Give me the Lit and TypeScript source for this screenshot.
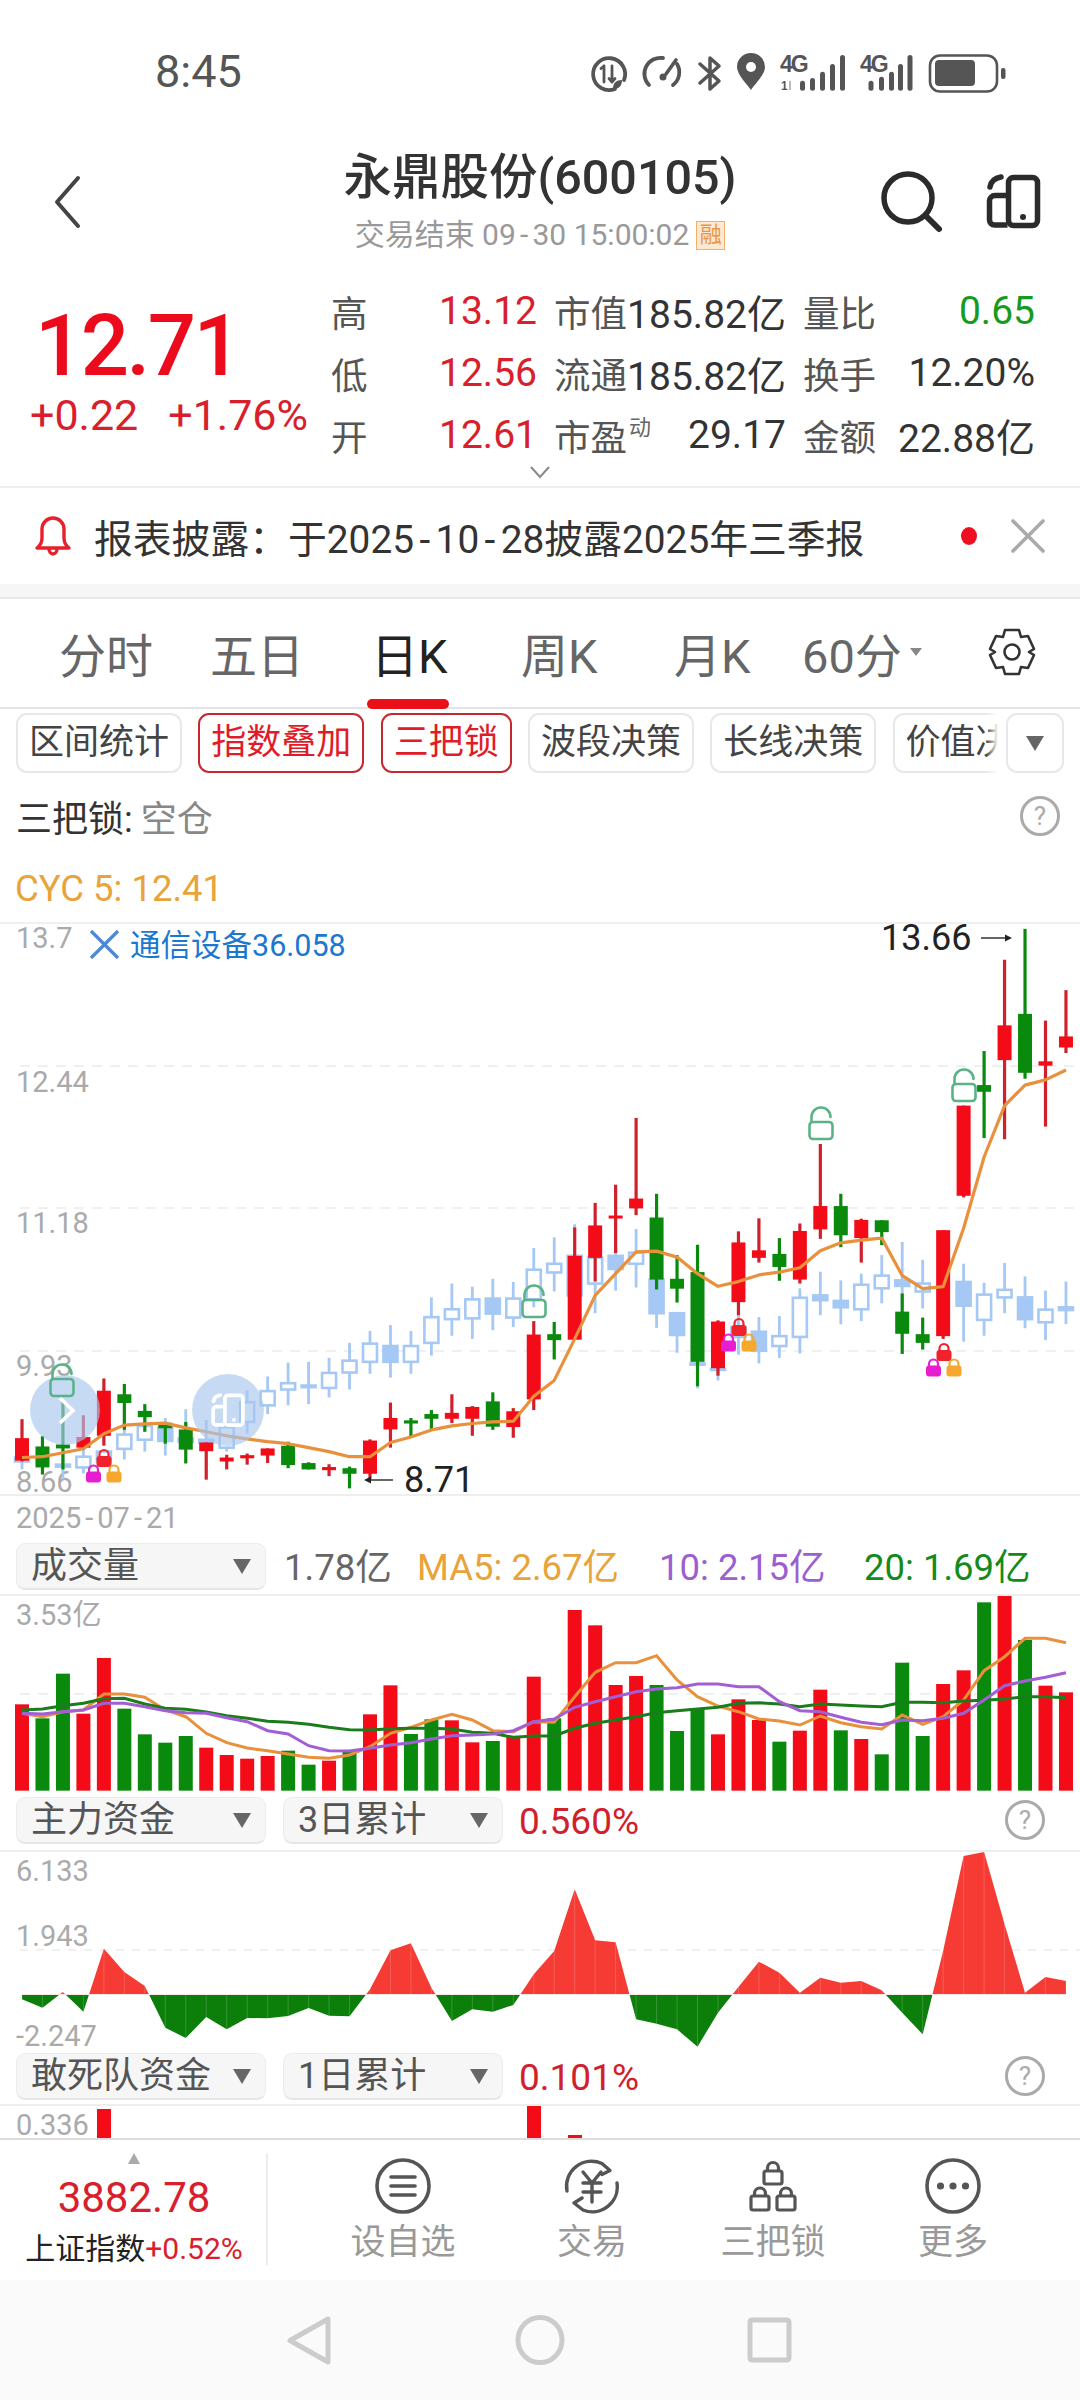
import { LitElement, html, css, svg } from "lit";
import { customElement } from "lit/decorators.js";

const RED = "#f40b18";
const GREEN = "#0a8a0c";
const BLUE = "#a5c8f4";
const X = (i: number) => 22 + 20.47 * i;
const KY = (z: number) => 900 + z / 2.529;
const VY = (z: number) => 1520 + z / 3;
const AY = (z: number) => 1800 + z / 3;

// [wick top, body top, body bottom, wick bottom, 1 = red / 0 = green]
const CANDLES: number[][] = [
  [1313, 1361, 1418, 1420, 1], [1356, 1382, 1435, 1453, 0], [1270, 1377, 1387, 1440, 0], [1303, 1358, 1385, 1390, 1],
  [1210, 1241, 1355, 1380, 1], [1224, 1250, 1272, 1340, 0], [1275, 1292, 1308, 1345, 0], [1320, 1322, 1336, 1375, 0],
  [1320, 1339, 1390, 1425, 0], [1372, 1372, 1394, 1466, 1], [1403, 1410, 1420, 1440, 1], [1400, 1404, 1412, 1428, 1],
  [1387, 1387, 1405, 1424, 1], [1370, 1380, 1429, 1437, 0], [1422, 1424, 1440, 1440, 0], [1427, 1434, 1442, 1457, 1],
  [1433, 1437, 1451, 1488, 0], [1364, 1367, 1451, 1465, 1], [1271, 1310, 1339, 1385, 1], [1310, 1316, 1324, 1358, 0],
  [1290, 1300, 1312, 1340, 0], [1250, 1297, 1312, 1323, 1], [1280, 1282, 1312, 1355, 1], [1245, 1268, 1332, 1340, 0],
  [1285, 1293, 1333, 1360, 1], [1065, 1099, 1263, 1290, 1], [1067, 1098, 1113, 1162, 0], [828, 900, 1112, 1112, 1],
  [766, 823, 905, 965, 1], [720, 798, 805, 893, 1], [551, 755, 780, 797, 1], [743, 803, 960, 985, 0],
  [898, 958, 983, 1018, 0], [872, 941, 1168, 1230, 0], [1063, 1066, 1184, 1203, 1], [838, 866, 1017, 1050, 1],
  [805, 886, 905, 917, 1], [855, 895, 928, 963, 0], [818, 837, 960, 970, 1], [617, 774, 833, 857, 1],
  [743, 774, 848, 878, 0], [806, 809, 855, 917, 1], [810, 810, 840, 873, 0], [995, 1041, 1097, 1148, 0],
  [1056, 1098, 1120, 1137, 0], [835, 835, 1103, 1110, 1], [520, 520, 748, 752, 1], [382, 468, 485, 602, 0],
  [151, 317, 405, 605, 1], [73, 288, 437, 452, 0], [305, 408, 419, 573, 1], [228, 345, 373, 387, 1],
];

// [index, wick top, body top, body bottom, wick bottom, filled]
const OVERLAY: number[][] = [
  [0, 1400, 1410, 1420, 1440, 0], [2, 1400, 1428, 1433, 1465, 1], [3, 1385, 1408, 1435, 1450, 0], [4, 1392, 1395, 1420, 1425, 0],
  [5, 1320, 1352, 1388, 1415, 0], [6, 1300, 1330, 1365, 1395, 0], [7, 1310, 1335, 1368, 1405, 1], [8, 1288, 1362, 1370, 1380, 1],
  [9, 1315, 1365, 1372, 1385, 1], [10, 1320, 1333, 1385, 1395, 0], [11, 1240, 1270, 1320, 1350, 0], [12, 1205, 1242, 1278, 1300, 0],
  [13, 1170, 1222, 1238, 1278, 0], [14, 1168, 1228, 1232, 1275, 1], [15, 1158, 1196, 1234, 1258, 0], [16, 1120, 1165, 1195, 1238, 0],
  [17, 1090, 1122, 1168, 1198, 0], [18, 1075, 1128, 1168, 1208, 1], [19, 1090, 1128, 1168, 1198, 0], [20, 1005, 1055, 1120, 1152, 0],
  [21, 970, 1035, 1060, 1102, 0], [22, 978, 1010, 1058, 1110, 0], [23, 958, 1008, 1046, 1088, 1], [24, 966, 1008, 1056, 1080, 0],
  [25, 880, 935, 1010, 1030, 0], [26, 853, 920, 942, 990, 0], [27, 820, 900, 1000, 1040, 0], [28, 905, 905, 970, 1045, 0],
  [29, 890, 900, 933, 988, 1], [30, 832, 892, 920, 980, 0], [31, 960, 960, 1045, 1082, 1], [32, 1045, 1045, 1100, 1145, 1],
  [33, 1170, 1172, 1175, 1235, 1], [34, 1185, 1186, 1188, 1215, 1], [35, 1040, 1080, 1105, 1150, 0], [36, 1055, 1092, 1140, 1172, 1],
  [37, 1052, 1103, 1128, 1158, 0], [38, 982, 1006, 1105, 1147, 0], [39, 940, 1000, 1012, 1050, 1], [40, 962, 1014, 1030, 1073, 1],
  [41, 945, 973, 1035, 1065, 0], [42, 898, 950, 982, 1020, 0], [43, 865, 962, 976, 1030, 1], [44, 910, 970, 990, 1033, 0],
  [46, 920, 966, 1026, 1117, 1], [47, 968, 998, 1062, 1102, 0], [48, 918, 986, 1005, 1045, 0], [49, 952, 1005, 1060, 1083, 1],
  [50, 988, 1036, 1068, 1113, 0], [51, 965, 1030, 1037, 1072, 1],
];

const CYC = [1410, 1408, 1398, 1388, 1350, 1328, 1325, 1323, 1335, 1345, 1355, 1363, 1370, 1375, 1385, 1395, 1408, 1408, 1372, 1358, 1340, 1330, 1324, 1320, 1318, 1255, 1215, 1110, 1000, 945, 890, 888, 903, 945, 977, 965, 948, 941, 930, 887, 867, 860, 855, 950, 983, 978, 830, 650, 520, 468, 455, 430];

const VOL: [number, number][] = [
  [553, 1], [595, 0], [461, 0], [581, 1], [414, 1], [566, 0], [643, 0], [668, 0], [648, 0], [683, 1], [705, 1], [716, 1], [708, 1],
  [692, 0], [734, 0], [722, 1], [690, 0], [583, 1], [496, 1], [642, 0], [598, 0], [601, 1], [667, 1], [663, 0], [648, 1], [470, 1],
  [595, 0], [270, 1], [316, 1], [495, 1], [468, 1], [495, 0], [633, 0], [565, 0], [643, 1], [538, 1], [600, 1], [665, 0], [632, 1],
  [509, 1], [631, 0], [657, 1], [703, 0], [428, 0], [648, 0], [492, 1], [451, 1], [247, 0], [228, 1], [360, 0], [497, 1], [517, 1],
];
const MA5 = [580, 590, 575, 570, 522, 522, 532, 570, 590, 640, 668, 684, 692, 702, 712, 715, 705, 680, 640, 622, 600, 583, 600, 632, 635, 605, 607, 530, 457, 428, 428, 407, 480, 530, 558, 575, 597, 603, 615, 588, 608, 620, 627, 585, 613, 590, 540, 452, 410, 355, 355, 368];
const MA10 = [580, 582, 575, 570, 550, 550, 560, 572, 578, 580, 593, 605, 632, 642, 677, 692, 693, 685, 675, 668, 657, 647, 645, 642, 632, 605, 597, 562, 545, 530, 515, 507, 503, 492, 492, 500, 500, 545, 572, 575, 592, 607, 614, 600, 602, 595, 580, 540, 497, 483, 472, 458];
const MA20 = [570, 567, 557, 550, 536, 535, 552, 565, 568, 576, 587, 595, 604, 607, 613, 622, 629, 630, 626, 625, 625, 627, 637, 640, 652, 648, 648, 625, 610, 600, 590, 578, 572, 567, 562, 550, 548, 552, 560, 552, 555, 558, 560, 547, 547, 548, 543, 541, 537, 530, 530, 533];
const FLOW = [595, 620, 573, 632, 443, 513, 555, 680, 711, 648, 685, 651, 652, 645, 621, 644, 646, 565, 448, 427, 560, 660, 625, 632, 612, 520, 450, 265, 418, 424, 655, 668, 685, 737, 635, 558, 482, 515, 575, 530, 545, 540, 568, 635, 700, 450, 165, 153, 370, 575, 528, 540];

const line = (vals: number[], f: (z: number) => number) => vals.map((v, i) => `${X(i).toFixed(1)},${f(v).toFixed(1)}`).join(" ");

const phoneIcon = (stroke: string, w: number) => svg`
  <g fill="none" stroke=${stroke} stroke-width=${w} stroke-linejoin="round">
    <rect x="1008.5" y="177.5" width="29" height="48" rx="5"/>
    <path d="M1008 195.5h-13a5.5 5.5 0 0 0-5.500 5.500v19a5 5 0 0 0 5 5h13"/>
    <path d="M1001 177c-6 1-10 4-11 10" stroke-linecap="round"/>
  </g>
  <circle cx="1023" cy="217" r="3" fill=${stroke}/>`;

const openLock = (cx: number, top: number) => svg`
  <g fill="none" stroke="#5ab386" stroke-width="2.600">
    <rect x=${cx - 11.5} y=${top + 16} width="23" height="17" rx="3.500"/>
    <path d=${`M${cx - 9.5} ${top + 16}v-5a9.500 9.500 0 0 1 19 0`} stroke-linecap="round"/>
  </g>`;

const miniLock = (cx: number, top: number, c: string) => svg`
  <path d=${`M${cx - 4.5} ${top + 8}v-2.500a4.500 4.500 0 0 1 9 0v2.500`} fill="none" stroke=${c} stroke-width="2.200"/>
  <rect x=${cx - 7.5} y=${top + 7} width="15" height="11" rx="3" fill=${c}/>`;

const triple = (cx: number, top: number) => svg`
  ${miniLock(cx, top, "#f0222b")}
  ${miniLock(cx - 10.5, top + 15.5, "#e61ed0")}
  ${miniLock(cx + 10, top + 15.5, "#f6a82c")}`;

const helpIcon = svg`<svg class="help" viewBox="0 0 42 42"><circle cx="21" cy="21" r="18.500" fill="none" stroke="#aaa" stroke-width="3"/><text x="21" y="30" text-anchor="middle" class="q">?</text></svg>`;

@customElement("app-root")
export class AppRoot extends LitElement {
  static styles = css`
    :host {
      display: block;
      width: 1080px;
      height: 2400px;
      overflow: hidden;
      background: #fff;
      font-family: Roboto, "Noto Sans CJK SC", sans-serif;
      color: #333;
    }
    svg { display: block; }
    .chart { flex: none; overflow: visible; }
    .page { display: flex; flex-direction: column; width: 1080px; height: 2400px; }
    .hy { padding: 0 .14em; }

    .status { height: 110px; flex: none; display: flex; align-items: flex-start; }
    .time { margin: 46px 0 0 155px; font-size: 45px; line-height: 52px; color: #555; }
    .status-icons { margin: 45px 60px 0 auto; width: 440px; height: 55px; }
    .g4 { font: 700 23px "Liberation Sans", sans-serif; fill: #555; letter-spacing: -2px; }
    .g1 { font: 700 12px "Liberation Sans", sans-serif; fill: #555; }

    .head { height: 152px; flex: none; display: grid; grid-template-columns: 1fr auto 1fr; align-items: start; }
    .back { width: 30px; height: 54px; margin: 65px 0 0 52px; }
    .head-mid { display: flex; flex-direction: column; align-items: center; padding-top: 38px; }
    .name { font-size: 48.500px; line-height: 60px; font-weight: 500; color: #333; white-space: nowrap; }
    .sub { margin-top: 7px; display: flex; align-items: center; gap: 7px; font-size: 30px; line-height: 40px; color: #999; white-space: nowrap; }
    .rong { display: block; width: 27px; height: 27px; border: 1px solid #f2b06b; background: #fce9d0; color: #e8964a; font-size: 22px; line-height: 26px; text-align: center; }
    .head-right { width: 170px; height: 66px; margin: 58px 35px 0 0; justify-self: end; }

    .quote { height: 226px; flex: none; display: flex; flex-direction: column; border-bottom: 2px solid #eee; box-sizing: border-box; }
    .quote-top { display: flex; padding-top: 18px; }
    .price { width: 331px; flex: none; padding-left: 35px; box-sizing: border-box; }
    .last { font-size: 85px; line-height: 90px; font-weight: 500; color: #ec0b1c; letter-spacing: -2.500px; margin-top: 21px; }
    .chg { display: flex; gap: 30px; margin: 0 0 0 -5px; font-size: 43px; line-height: 48px; color: #d8202c; white-space: nowrap; }
    .stats { display: grid; grid-template-columns: 206px 232px 232px; column-gap: 17px; grid-auto-rows: 62px; }
    .cell { display: flex; justify-content: space-between; align-items: center; font-size: 39px; white-space: nowrap; color: #333; }
    .cell .l { font-size: 36.500px; color: #555; }
    .red { color: #d8202c; }
    .grn { color: #179a1e; }
    .dyn { font-size: 22px; vertical-align: 16px; margin-left: 2px; color: #666; }
    .chev { width: 22px; height: 14px; margin: -1px auto 0; }

    .notice { height: 96px; flex: none; display: flex; align-items: center; padding: 0 35px 0 34px; box-sizing: border-box; }
    .bell { width: 38px; height: 44px; flex: none; }
    .notice-txt { margin-left: 22px; font-size: 38.800px; color: #333; white-space: nowrap; }
    .dot { margin-left: auto; width: 16px; height: 18px; border-radius: 50%; background: #ee1020; flex: none; }
    .close { margin-left: 34px; width: 34px; height: 34px; flex: none; }
    .band { height: 15px; flex: none; background: #f6f6f6; border-bottom: 2px solid #e8e8e8; box-sizing: border-box; }

    .tabs { height: 110px; flex: none; display: grid; grid-template-columns: 151px 161px 150px 153px 128px 185px auto; padding-left: 59px; align-items: center; position: relative; border-bottom: 2px solid #e4e4e4; box-sizing: border-box; padding-bottom: 2px; font-size: 47px; color: #666; }
    .tab { display: flex; align-items: center; white-space: nowrap; }
    .tab.on { color: #222; }
    .bar { position: absolute; left: 367px; top: 100px; width: 82px; height: 10px; border-radius: 5px; background: #ea1018; }
    .caret { width: 12px; height: 8px; margin-left: 8px; }
    .gear { width: 50px; height: 50px; }

    .chips { height: 66px; flex: none; display: flex; padding-top: 4px; box-sizing: border-box; }
    .chips-scroll { width: 998px; flex: none; display: flex; gap: 16.300px; padding-left: 16px; overflow: hidden; position: relative; box-sizing: border-box; }
    .chips-scroll::after { content: ""; position: absolute; right: 0; top: 0; bottom: 0; width: 12px; background: linear-gradient(to right, rgba(255,255,255,0), #fff); }
    .chip { flex: none; height: 60px; box-sizing: border-box; padding: 0 11px; border: 2px solid #e8e8e8; border-radius: 11px; font-size: 35px; line-height: 56px; color: #444; white-space: nowrap; }
    .chip.act { border-color: #c22a2f; color: #e01c28; }
    .chip-dd { margin-left: 8px; width: 58px; height: 60px; box-sizing: border-box; border: 2px solid #e8e8e8; border-radius: 11px; display: flex; align-items: center; justify-content: center; }
    .tri { width: 0; height: 0; border-left: 9px solid transparent; border-right: 9px solid transparent; border-top: 15px solid #666; flex: none; }

    .lock-row { height: 85px; flex: none; display: flex; align-items: center; padding: 0 19px 4px 16px; box-sizing: border-box; font-size: 36px; color: #333; }
    .lock-row .v { color: #888; margin-left: 8px; }
    .help { width: 42px; height: 42px; margin-left: auto; flex: none; }
    .q { font: 400 26px Roboto, sans-serif; fill: #aaa; }
    .cyc-row { height: 64px; flex: none; padding-left: 15px; font-size: 36.500px; line-height: 58px; color: #e8a33a; box-sizing: border-box; border-bottom: 2px solid #f0f0f0; }

    .axis { font-size: 29px; fill: #aaa; font-family: Roboto, "Noto Sans CJK SC", sans-serif; dominant-baseline: central; }
    .ov-name { font-size: 30.500px; fill: #1b78d0; font-family: Roboto, "Noto Sans CJK SC", sans-serif; dominant-baseline: central; }
    .ext { font-size: 36px; fill: #222; font-family: Roboto, sans-serif; dominant-baseline: central; }

    .date { height: 49px; flex: none; padding-left: 16px; font-size: 29px; line-height: 44px; color: #aaa; border-top: 2px solid #eee; box-sizing: border-box; }
    .ind { flex: none; display: grid; padding-left: 16px; box-sizing: border-box; font-size: 36.500px; white-space: nowrap; border-bottom: 2px solid #eee; align-items: start; }
    .vol-h { height: 53px; grid-template-columns: 268px 133px 242px 205px auto; }
    .cap-h { grid-template-columns: 267px 236px auto 1fr; padding-right: 34px; }
    .h55 { height: 55px; }
    .h53 { height: 53px; }
    .sel { height: 47px; box-sizing: border-box; display: flex; align-items: center; justify-content: space-between; background: #f6f6f6; border: 1px solid #ececec; border-bottom: 2px solid #e6e6e6; border-radius: 9px; padding: 0 14px; color: #555; font-size: 36px; line-height: 46px; }
    .sel.w250 { width: 250px; }
    .sel.w220 { width: 220px; }
    .ind .tx { line-height: 50px; }
    .gr { color: #666; }
    .or { color: #e8a33a; }
    .pu { color: #9c5fd0; }
    .g2 { color: #148a1a; }
    .pct { color: #d0202c; font-size: 37px; }
    .ind .help { margin: 2px 0 0 auto; }
    .sp5 { height: 5px; flex: none; }

    .bottom { height: 142px; flex: none; display: flex; border-top: 2px solid #ddd; box-sizing: border-box; }
    .idx { width: 268px; flex: none; box-sizing: border-box; display: flex; flex-direction: column; align-items: center; padding-top: 13px; position: relative; }
    .idx::after { content: ""; position: absolute; right: 0; top: 13px; height: 112px; width: 2px; background: #eee; }
    .up { width: 12px; height: 11px; }
    .idx-v { font-size: 42px; line-height: 48px; margin-top: 10px; color: #d8202c; }
    .idx-l { margin-top: 5px; font-size: 30px; line-height: 44px; color: #222; white-space: nowrap; }
    .navs { flex: 1; display: grid; grid-template-columns: 184px 194px 168px 192px; padding-left: 43px; }
    .nav { display: flex; flex-direction: column; align-items: center; padding-top: 18px; }
    .nav svg { width: 60px; height: 56px; }
    .nav span { font-size: 35px; line-height: 48px; color: #999; margin-top: 5px; white-space: nowrap; }
    .sys { height: 120px; flex: none; background: #fafafa; }
  `;

  private statusIcons() {
    const bars = (xs: number[], tops: number[]) => xs.map((x, i) => svg`<rect x=${x} y=${45 + tops[i]} width="5" height=${45.7 - tops[i]} rx="2.500" fill="#555"/>`);
    return svg`<svg class="status-icons" viewBox="580 45 440 55">
      <g fill="none" stroke="#555" stroke-width="3.800" stroke-linecap="round">
        <path d="M624 80a16 16 0 1 0-9 9"/>
        <path d="M604 66l-3 2.500M604 66v16M612 66v16M612 82l-3-3.500M612 82l3-3.500" stroke-width="2.800"/>
        <path d="M649 85a16 16 0 0 1 14-27M677 64a16 16 0 0 1-4 21"/>
        <path d="M676 60l-10 14" stroke-width="3.600"/>
        <path d="M700 64l19 17-9 8V58l9 8-19 17" stroke-width="3.500" stroke-linejoin="round"/>
      </g>
      <path d="M622 80c-6 0-9 3-9 9 6 0 9-3 9-9z" fill="#555"/>
      <circle cx="663" cy="77" r="3.500" fill="#555"/>
      <path d="M751 90c-3-5-14-15-14-23a14 14 0 0 1 28 0c0 8-11 18-14 23z" fill="#555"/>
      <circle cx="751" cy="67" r="5" fill="#fff"/>
      <text x="780" y="72" class="g4">4G</text>
      <text x="781" y="90" class="g1">1</text>
      <path d="M790 81v9" stroke="#bbb" stroke-width="2"/>
      ${bars([800, 810, 820, 830, 840], [35.7, 33, 26.7, 19, 10])}
      <text x="860" y="72" class="g4">4G</text>
      ${bars([868.5, 879, 889, 898, 907.5], [35.7, 31.7, 26.7, 19, 10])}
      <rect x="930" y="55.500" width="67" height="36" rx="10" fill="none" stroke="#555" stroke-width="2.600"/>
      <rect x="935" y="60" width="40" height="26" rx="4" fill="#555"/>
      <rect x="1001" y="68" width="4.500" height="11" rx="2" fill="#555"/>
    </svg>`;
  }

  private kChart() {
    const overlay = OVERLAY.map(([i, wt, bt, bb, wb, filled]) => {
      const x = X(i);
      return svg`<path d=${`M${x} ${KY(wt)}V${KY(wb)}`} stroke=${BLUE} stroke-width="2.800"/>
        <rect x=${x - 7} y=${KY(bt)} width="14" height=${Math.max(KY(bb) - KY(bt), 1)} fill=${filled ? BLUE : "#fff"} stroke=${BLUE} stroke-width="2.600"/>`;
    });
    const candles = CANDLES.map(([wt, bt, bb, wb, up], i) => {
      const x = X(i);
      const c = up ? RED : GREEN;
      const wc = up ? "#d0202c" : GREEN;
      return svg`<path d=${`M${x} ${KY(wt)}V${KY(wb)}`} stroke=${wc} stroke-width="3.200"/>
        <rect x=${x - 7} y=${KY(bt)} width="14" height=${Math.max(KY(bb) - KY(bt), 3)} fill=${c}/>`;
    });
    const grid = [1066, 1208, 1351].map((y) => svg`<path d=${`M20 ${y}H1080`} stroke="#ececec" stroke-width="1.500" stroke-dasharray="10 8"/>`);
    return svg`<svg class="chart" width="1080" height="570" viewBox="0 924 1080 570">
      ${grid}
      <text x="16" y="938" class="axis">13.7</text>
      <text x="16" y="1082" class="axis">12.44</text>
      <text x="16" y="1223" class="axis">11.18</text>
      <text x="16" y="1366" class="axis">9.93</text>
      <text x="16" y="1482" class="axis">8.66</text>
      <path d="M91 931l27 27M118 931l-27 27" stroke="#4d87d8" stroke-width="3.200" fill="none"/>
      <text x="130" y="945" class="ov-name">通信设备36.058</text>
      ${overlay}
      ${candles}
      <polyline points=${line(CYC, KY)} fill="none" stroke="#e8903c" stroke-width="3.200" stroke-linejoin="round"/>
      <circle cx="65" cy="1410" r="35" fill="#a9c6ee" fill-opacity=".65"/>
      <circle cx="228" cy="1410" r="36" fill="#a9c6ee" fill-opacity=".65"/>
      <path d="M60 1398l13 12.500-13 12.500" fill="none" stroke="#fff" stroke-width="3.600"/>
      <g transform="translate(228 1410) scale(.62) translate(-1013.500 -201)">${phoneIcon("#fff", 6)}</g>
      ${openLock(62, 1363)}
      ${openLock(534, 1284)}
      ${openLock(821, 1106)}
      ${openLock(964, 1068)}
      ${triple(104, 1449)}
      ${triple(739, 1318)}
      ${triple(944, 1343)}
      <text x="881" y="938" class="ext">13.66</text>
      <path d="M981 938h27" stroke="#333" stroke-width="1.500"/><path d="M1012 938l-7-3.500v7z" fill="#222"/>
      <text x="404" y="1480" class="ext">8.71</text>
      <path d="M368 1480h25" stroke="#333" stroke-width="1.500"/><path d="M364 1480l7-3.500v7z" fill="#222"/>
    </svg>`;
  }

  private volChart() {
    const base = VY(812);
    const bars = VOL.map(([t, up], i) => svg`<rect x=${X(i) - 7} y=${VY(t)} width="14" height=${base - VY(t)} fill=${up ? RED : GREEN}/>`);
    return svg`<svg class="chart" width="1080" height="196" viewBox="0 1596 1080 196">
      <path d="M20 1694H1080" stroke="#ececec" stroke-width="1.500" stroke-dasharray="10 8"/>
      <text x="16" y="1615" class="axis">3.53亿</text>
      ${bars}
      <polyline points=${line(MA5, VY)} fill="none" stroke="#e8903c" stroke-width="3"/>
      <polyline points=${line(MA20, VY)} fill="none" stroke="#1a7d1c" stroke-width="3"/>
      <polyline points=${line(MA10, VY)} fill="none" stroke="#a25fd4" stroke-width="3"/>
    </svg>`;
  }

  private flowChart() {
    const base = 1993.5;
    const pts = FLOW.map((v, i) => `${X(i).toFixed(1)} ${AY(v).toFixed(1)}`).join("L");
    const d = `M${X(0)} ${base}L${pts}L${X(51)} ${base}Z`;
    const seps = FLOW.map((_, i) => svg`<path d=${`M${X(i)} 1850V2046`} stroke="#fff" stroke-opacity=".18" stroke-width="1"/>`);
    return svg`<svg class="chart" width="1080" height="196" viewBox="0 1851 1080 196">
      <defs>
        <clipPath id="above"><rect x="0" y="1851" width="1080" height=${base - 1851}/></clipPath>
        <clipPath id="below"><rect x="0" y=${base} width="1080" height="60"/></clipPath>
      </defs>
      <path d="M20 1949H1080" stroke="#ececec" stroke-width="1.500" stroke-dasharray="8 8"/>
      <text x="16" y="1870" class="axis">6.133</text>
      <text x="16" y="1935" class="axis">1.943</text>
      <text x="16" y="2035" class="axis">-2.247</text>
      <path d=${d} fill="#f53b33" clip-path="url(#above)"/>
      <path d=${d} fill="#0b7f0a" clip-path="url(#below)"/>
      ${seps}
      <path d=${`M${X(0)} ${base}H${X(51)}`} stroke="#f4e6e2" stroke-width="1.200"/>
    </svg>`;
  }

  render() {
    return html`<div class="page">
      <div class="status">
        <div class="time">8:45</div>
        ${this.statusIcons()}
      </div>

      <div class="head">
        <svg class="back" viewBox="0 0 30 54"><path d="M26 3L5 27l21 24" fill="none" stroke="#444" stroke-width="4" stroke-linecap="round" stroke-linejoin="round"/></svg>
        <div class="head-mid">
          <div class="name">永鼎股份(600105)</div>
          <div class="sub"><span>交易结束 09<span class="hy">-</span>30 15:00:02</span><span class="rong">融</span></div>
        </div>
        <svg class="head-right" viewBox="875 168 170 66">
          <circle cx="908" cy="198" r="24" fill="none" stroke="#2b2b2b" stroke-width="5.500"/>
          <path d="M926 216l13 13" stroke="#2b2b2b" stroke-width="6" stroke-linecap="round"/>
          ${phoneIcon("#2b2b2b", 5.5)}
        </svg>
      </div>

      <div class="quote">
        <div class="quote-top">
          <div class="price">
            <div class="last">12.71</div>
            <div class="chg"><span>+0.22</span><span>+1.76%</span></div>
          </div>
          <div class="stats">
            <div class="cell"><span class="l">高</span><span class="red">13.12</span></div>
            <div class="cell"><span class="l">市值</span><span>185.82亿</span></div>
            <div class="cell"><span class="l">量比</span><span class="grn">0.65</span></div>
            <div class="cell"><span class="l">低</span><span class="red">12.56</span></div>
            <div class="cell"><span class="l">流通</span><span>185.82亿</span></div>
            <div class="cell"><span class="l">换手</span><span>12.20%</span></div>
            <div class="cell"><span class="l">开</span><span class="red">12.61</span></div>
            <div class="cell"><span class="l">市盈<span class="dyn">动</span></span><span>29.17</span></div>
            <div class="cell"><span class="l">金额</span><span>22.88亿</span></div>
          </div>
        </div>
        <svg class="chev" viewBox="0 0 22 14"><path d="M2 2l9 10 9-10" fill="none" stroke="#888" stroke-width="2"/></svg>
      </div>

      <div class="notice">
        <svg class="bell" viewBox="0 0 38 44" fill="none" stroke="#e8202c" stroke-width="3.400" stroke-linejoin="round">
          <path d="M3 34h32c-4-3-5-6-5-10v-9a11 11 0 0 0-22 0v9c0 4-1 7-5 10z"/>
          <path d="M15 35a4 5 0 0 0 8 0" />
        </svg>
        <div class="notice-txt">报表披露：于2025<span class="hy">-</span>10<span class="hy">-</span>28披露2025年三季报</div>
        <div class="dot"></div>
        <svg class="close" viewBox="0 0 34 34"><path d="M2 2l30 30M32 2L2 32" stroke="#aaa" stroke-width="3.600" stroke-linecap="round"/></svg>
      </div>
      <div class="band"></div>

      <div class="tabs">
        <div class="tab">分时</div>
        <div class="tab">五日</div>
        <div class="tab on">日K</div>
        <div class="tab">周K</div>
        <div class="tab">月K</div>
        <div class="tab">60分<svg class="caret" viewBox="0 0 12 8"><path d="M0 0h12L6 8z" fill="#888"/></svg></div>
        <svg class="gear" viewBox="0 0 50 50"><path d="M18 3h14l2 7 7-1 6 13-5 3 5 3-6 13-7-1-2 7H18l-2-7-7 1-6-13 5-3-5-3 6-13 7 1z" fill="none" stroke="#333" stroke-width="2.600" stroke-linejoin="round"/><circle cx="25" cy="25" r="7.500" fill="none" stroke="#333" stroke-width="2.600"/></svg>
        <div class="bar"></div>
      </div>

      <div class="chips">
        <div class="chips-scroll">
          <div class="chip">区间统计</div>
          <div class="chip act">指数叠加</div>
          <div class="chip act">三把锁</div>
          <div class="chip">波段决策</div>
          <div class="chip">长线决策</div>
          <div class="chip">价值决策</div>
        </div>
        <div class="chip-dd"><span class="tri"></span></div>
      </div>

      <div class="lock-row"><span>三把锁:</span><span class="v">空仓</span>${helpIcon}</div>
      <div class="cyc-row">CYC 5: 12.41</div>

      ${this.kChart()}
      <div class="date">2025<span class="hy">-</span>07<span class="hy">-</span>21</div>

      <div class="ind vol-h">
        <div class="sel w250"><span>成交量</span><span class="tri"></span></div>
        <span class="tx gr">1.78亿</span>
        <span class="tx or">MA5: 2.67亿</span>
        <span class="tx pu">10: 2.15亿</span>
        <span class="tx g2">20: 1.69亿</span>
      </div>
      ${this.volChart()}
      <div class="sp5"></div>

      <div class="ind cap-h h55">
        <div class="sel w250"><span>主力资金</span><span class="tri"></span></div>
        <div class="sel w220"><span>3日累计</span><span class="tri"></span></div>
        <span class="tx pct">0.560%</span>
        ${helpIcon}
      </div>
      ${this.flowChart()}
      <div class="sp5"></div>

      <div class="ind cap-h h53">
        <div class="sel w250"><span>敢死队资金</span><span class="tri"></span></div>
        <div class="sel w220"><span>1日累计</span><span class="tri"></span></div>
        <span class="tx pct">0.101%</span>
        ${helpIcon}
      </div>
      <svg class="chart" width="1080" height="32" viewBox="0 2106 1080 32">
        <text x="16" y="2125" class="axis">0.336</text>
        <rect x="97" y="2109" width="14" height="29" fill=${RED}/>
        <rect x="527" y="2106" width="14" height="32" fill=${RED}/>
        <rect x="568" y="2135" width="14" height="3" fill=${RED}/>
      </svg>

      <div class="bottom">
        <div class="idx">
          <svg class="up" viewBox="0 0 12 11"><path d="M6 0l6 11H0z" fill="#aaa"/></svg>
          <div class="idx-v">3882.78</div>
          <div class="idx-l">上证指数<span class="red">+0.52%</span></div>
        </div>
        <div class="navs">
          <div class="nav">
            <svg viewBox="-30 -28 60 56" fill="none" stroke="#555" stroke-width="3.600"><circle r="26"/><path d="M-12-9h24M-12 0h24M-12 9h24" stroke-linecap="round"/></svg>
            <span>设自选</span>
          </div>
          <div class="nav">
            <svg viewBox="-30 -28 60 56" fill="none" stroke="#555" stroke-width="3.400" stroke-linecap="round" stroke-linejoin="round">
              <path d="M-25 5a25 25 0 0 1 35-27.500l8 7-8 4"/>
              <path d="M25-3a25 25 0 0 1-34 27l-9-7 8-5"/>
              <path d="M-9-14L0-3l9-11M0-3V16M-9-3H9M-9 6H9"/>
            </svg>
            <span>交易</span>
          </div>
          <div class="nav">
            <svg viewBox="-30 -28 60 56" fill="none" stroke="#555" stroke-width="3.200" stroke-linejoin="round">
              <rect x="-9" y="-15" width="18" height="13" rx="2"/><path d="M-5.500-15v-3a5.500 5.500 0 0 1 11 0v3"/>
              <rect x="-22" y="10" width="18" height="14" rx="2"/><path d="M-18.500 10v-2.500a5.500 5.500 0 0 1 11 0v2.500"/>
              <rect x="4" y="10" width="18" height="14" rx="2"/><path d="M7.500 10v-2.500a5.500 5.500 0 0 1 11 0v2.500"/>
            </svg>
            <span>三把锁</span>
          </div>
          <div class="nav">
            <svg viewBox="-30 -28 60 56" fill="none" stroke="#555" stroke-width="3.600"><circle r="26"/><g fill="#555" stroke="none"><circle cx="-12.500" r="3.600"/><circle r="3.600"/><circle cx="12.500" r="3.600"/></g></svg>
            <span>更多</span>
          </div>
        </div>
      </div>

      <div class="sys">
        <svg width="1080" height="120" viewBox="0 2280 1080 120">
          <path d="M328 2319v43l-38-21.500z" fill="none" stroke="#ccc" stroke-width="5" stroke-linejoin="round"/>
          <ellipse cx="540" cy="2340" rx="22" ry="22.500" fill="none" stroke="#ccc" stroke-width="5"/>
          <rect x="750" y="2320" width="39" height="40" rx="2" fill="none" stroke="#ccc" stroke-width="5"/>
        </svg>
      </div>
    </div>`;
  }
}
